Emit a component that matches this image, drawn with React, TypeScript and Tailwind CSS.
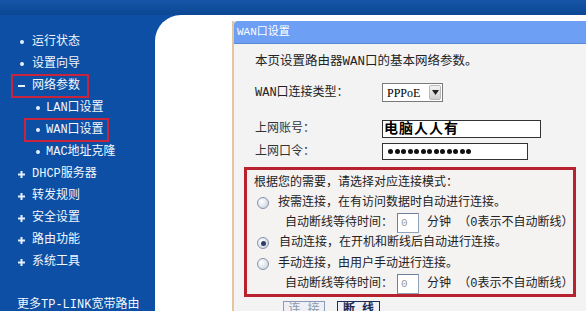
const font = "font-['Liberation_Mono','Noto_Sans_CJK_SC',monospace]";

type Item = { t: string; m: "dot" | "plus" | "minus"; lvl: 0 | 1; box?: boolean };

const items: Item[] = [
  { t: "运行状态", m: "dot", lvl: 0 },
  { t: "设置向导", m: "dot", lvl: 0 },
  { t: "网络参数", m: "minus", lvl: 0, box: true },
  { t: "LAN口设置", m: "dot", lvl: 1 },
  { t: "WAN口设置", m: "dot", lvl: 1, box: true },
  { t: "MAC地址克隆", m: "dot", lvl: 1 },
  { t: "DHCP服务器", m: "plus", lvl: 0 },
  { t: "转发规则", m: "plus", lvl: 0 },
  { t: "安全设置", m: "plus", lvl: 0 },
  { t: "路由功能", m: "plus", lvl: 0 },
  { t: "系统工具", m: "plus", lvl: 0 },
];

function Marker({ m }: { m: Item["m"] }) {
  if (m === "dot") return <span className="w-[4px] h-[4px] rounded-full bg-[#e4f0ff]" />;
  if (m === "minus") return <span className="w-[7px] h-[2px] bg-[#e4f0ff]" />;
  return (
    <svg width="7" height="7" viewBox="0 0 7 7">
      <path d="M3.5 0V7M0 3.5H7" stroke="#e4f0ff" strokeWidth="2" />
    </svg>
  );
}

function NavRow({ item }: { item: Item }) {
  const inner = (
    <>
      <span className={"flex w-[7px] justify-center items-center " + (item.lvl === 0 ? "mr-[7px]" : "mr-[5px]")}>
        <Marker m={item.m} />
      </span>
      <span>{item.t}</span>
    </>
  );
  if (item.box) {
    return (
      <div className={"h-[22px] flex items-center " + (item.lvl === 0 ? "pl-[11px]" : "pl-[24px]")}>
        <span className={"h-[24px] flex items-center border-2 border-[#c8243c] " + (item.lvl === 0 ? "pl-[5px] pr-[7px]" : "pl-[8px] pr-[3px]")}>
          {inner}
        </span>
      </div>
    );
  }
  return (
    <div className={"h-[22px] flex items-center " + (item.lvl === 0 ? "pl-[18px]" : "pl-[34px]")}>{inner}</div>
  );
}

function Radio({ checked }: { checked?: boolean }) {
  return (
    <span className="w-[12px] h-[12px] shrink-0 rounded-full border border-[#8393ad] bg-[radial-gradient(circle_at_35%_35%,#ffffff,#c5ccd8)] flex items-center justify-center">
      {checked && <span className="w-[5px] h-[5px] rounded-full bg-[#2c3f66]" />}
    </span>
  );
}

function WaitRow({ h }: { h: string }) {
  return (
    <div className={h + " flex items-center pl-[38px] whitespace-nowrap"}>
      <span className="shrink-0">自动断线等待时间：</span>
      <span className="shrink-0 ml-[4px] w-[22px] h-[20px] bg-white border border-[#8fa3bd] border-t-[#6f7f99] border-l-[#6f7f99] text-[11px] text-[#9a9a9a] pl-[3px] leading-[18px]">0</span>
      <span className="shrink-0 ml-[8px]">分钟 （0表示不自动断线）</span>
    </div>
  );
}

export default function App() {
  return (
    <div className={"w-[586px] h-[311px] overflow-hidden flex flex-col bg-[#0c4fa4] " + font}>
      <div className="h-[15px] shrink-0 bg-gradient-to-b from-[#1656a8] to-[#0a4693]" />
      <div className="flex flex-1 min-h-0">
        <div className="w-[155px] shrink-0 pt-[16px] text-[12px] text-[#f2f7ff]">
          {items.map((it) => (
            <NavRow key={it.t} item={it} />
          ))}
          <div className="h-[22px] mt-[21px] flex items-center pl-[17px]">更多TP-LINK宽带路由</div>
        </div>
        <div className="flex-1 bg-white rounded-tl-[26px] pl-[77px] pt-[6px]">
          <div className="w-[400px] h-[400px] border-l-2 border-[#e3c6a0] bg-[#f3f3f3] text-[12px] text-[#222]">
            <div className="h-[23px] bg-[#6d9ff4] border-b border-[#5a89d6] rounded-tl-[4px] flex items-center pl-[3px] text-[11px] text-white">
              WAN口设置
            </div>
            <div className="pl-[21px]">
              <div className="mt-[8px] h-[20px] flex items-center text-[12.5px]">本页设置路由器WAN口的基本网络参数。</div>
              <div className="mt-[11px] h-[19px] flex items-center">
                <span className="w-[127px]">WAN口连接类型：</span>
                <span className="h-[19px] flex border border-[#7a7a7a] bg-white">
                  <span className="w-[45px] flex items-center pl-[4px] text-[12px] font-['Liberation_Serif',serif] text-black">PPPoE</span>
                  <span className="w-[12px] m-[1px] rounded-[2px] bg-gradient-to-b from-[#f4f4f4] to-[#cfcfcf] border border-[#b9b9b9] flex items-center justify-center">
                    <svg width="7" height="5" viewBox="0 0 7 5"><path d="M0 0H7L3.5 5Z" fill="#222" /></svg>
                  </span>
                </span>
              </div>
              <div className="mt-[18px] h-[18px] flex items-center">
                <span className="w-[127px] text-[#333]">上网账号：</span>
                <span className="w-[159px] h-[18px] bg-white border border-[#333] flex items-center pl-[1px] text-[14px] font-bold text-black tracking-[1px]">电脑人人有</span>
              </div>
              <div className="mt-[5px] h-[17px] flex items-center">
                <span className="w-[127px] text-[#333]">上网口令：</span>
                <span className="w-[146px] h-[17px] bg-white border border-[#333] flex items-center gap-[1.5px] pl-[5px]">
                  {Array.from({ length: 13 }).map((_, i) => (
                    <span key={i} className="w-[5px] h-[5px] rounded-full bg-[#111]" />
                  ))}
                </span>
              </div>
            </div>
            <div className="ml-[10px] mt-[7px] w-[332px] h-[130px] border-[3px] border-[#b8222f] bg-[#f5f2f2]">
              <div className="mt-[3px] h-[20px] flex items-center pl-[7px]">根据您的需要，请选择对应连接模式：</div>
              <div className="h-[20px] flex items-center pl-[10px]">
                <Radio />
                <span className="ml-[9px]">按需连接，在有访问数据时自动进行连接。</span>
              </div>
              <WaitRow h="h-[20px]" />
              <div className="h-[20px] flex items-center pl-[10px]">
                <Radio checked />
                <span className="ml-[10px]">自动连接，在开机和断线后自动进行连接。</span>
              </div>
              <div className="h-[21px] flex items-center pl-[10px]">
                <Radio />
                <span className="ml-[9px]">手动连接，由用户手动进行连接。</span>
              </div>
              <WaitRow h="h-[20px]" />
            </div>
            <div className="mt-[4px] flex gap-[12px] pl-[49px]">
              <span className="w-[42px] h-[18px] border border-[#8a9ab8] bg-[#eef0f6] flex items-center justify-center leading-none text-[#8c9aae]">连 接</span>
              <span className="w-[43px] h-[18px] border border-[#1e2d5a] bg-[#eef0f6] flex items-center justify-center leading-none text-[#1b2850] font-bold">断 线</span>
            </div>
          </div>
        </div>
      </div>
    </div>
  );
}
